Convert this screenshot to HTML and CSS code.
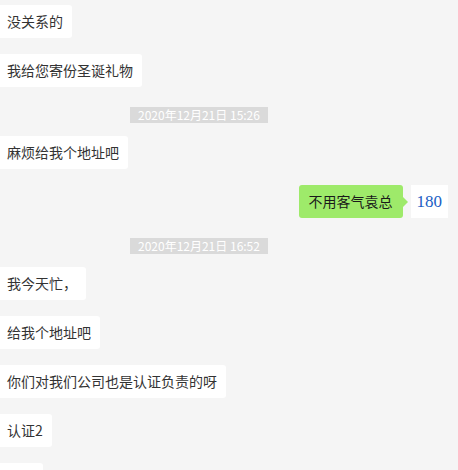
FILE: index.html
```html
<!DOCTYPE html>
<html lang="zh-CN">
<head>
  <meta charset="UTF-8" />
  <meta name="viewport" content="width=device-width, initial-scale=1.0" />
  <title>聊天记录</title>
  <link rel="stylesheet" href="styles.css">
</head>
<body>
  <div class="chat">
    <div class="msg left"><div class="bubble">没关系的</div></div>
    <div class="msg left"><div class="bubble">我给您寄份圣诞礼物</div></div>

    <div class="time">2020年12月21日 15:26</div>

    <div class="msg left"><div class="bubble">麻烦给我个地址吧</div></div>
    <div class="msg right">
      <div class="bubble mine">不用客气袁总</div>
      <div class="tag">180</div>
    </div>

    <div class="time">2020年12月21日 16:52</div>

    <div class="msg left"><div class="bubble">我今天忙，</div></div>
    <div class="msg left"><div class="bubble">给我个地址吧</div></div>
    <div class="msg left"><div class="bubble">你们对我们公司也是认证负责的呀</div></div>
    <div class="msg left"><div class="bubble">认证2</div></div>
    <div class="msg left"><div class="bubble cut"></div></div>
  </div>
</body>
</html>
```

FILE: styles.css
```css
html, body {
  height: 100%;
}
body {
  margin: 0;
  background: #f5f5f5;
  font-family: "Noto Sans CJK SC", "Microsoft YaHei", sans-serif;
  color: #333;
  overflow: hidden;
}
.chat {
  display: flex;
  flex-direction: column;
  padding-top: 5px;
}
.msg {
  display: flex;
  margin-bottom: 16px;
}
.msg.right {
  justify-content: flex-end;
  align-items: stretch;
  gap: 8px;
  padding-right: 10px;
}
.bubble {
  position: relative;
  background: #fff;
  font-size: 14px;
  line-height: 19px;
  padding: 7px 9px 7px 7px;
  border-radius: 0 3px 3px 0;
}
.bubble.cut {
  width: 27px;
  height: 19px;
}
.bubble.mine {
  background: #9eea6a;
  color: #1a1a1a;
  padding: 7px 10px;
  border-radius: 3px;
}
.bubble.mine::after {
  content: "";
  position: absolute;
  right: -5px;
  top: 12px;
  border-left: 5px solid #9eea6a;
  border-top: 5px solid transparent;
  border-bottom: 5px solid transparent;
}
.tag {
  display: flex;
  align-items: center;
  background: #fff;
  padding: 0 6px;
  font-family: "Liberation Serif", serif;
  font-size: 17px;
  color: #2160c4;
}
.time {
  align-self: flex-start;
  margin: 4px 0 13px 130px;
  padding: 0 8px;
  background: #dadada;
  color: #fff;
  font-size: 12px;
  line-height: 16px;
}
```
